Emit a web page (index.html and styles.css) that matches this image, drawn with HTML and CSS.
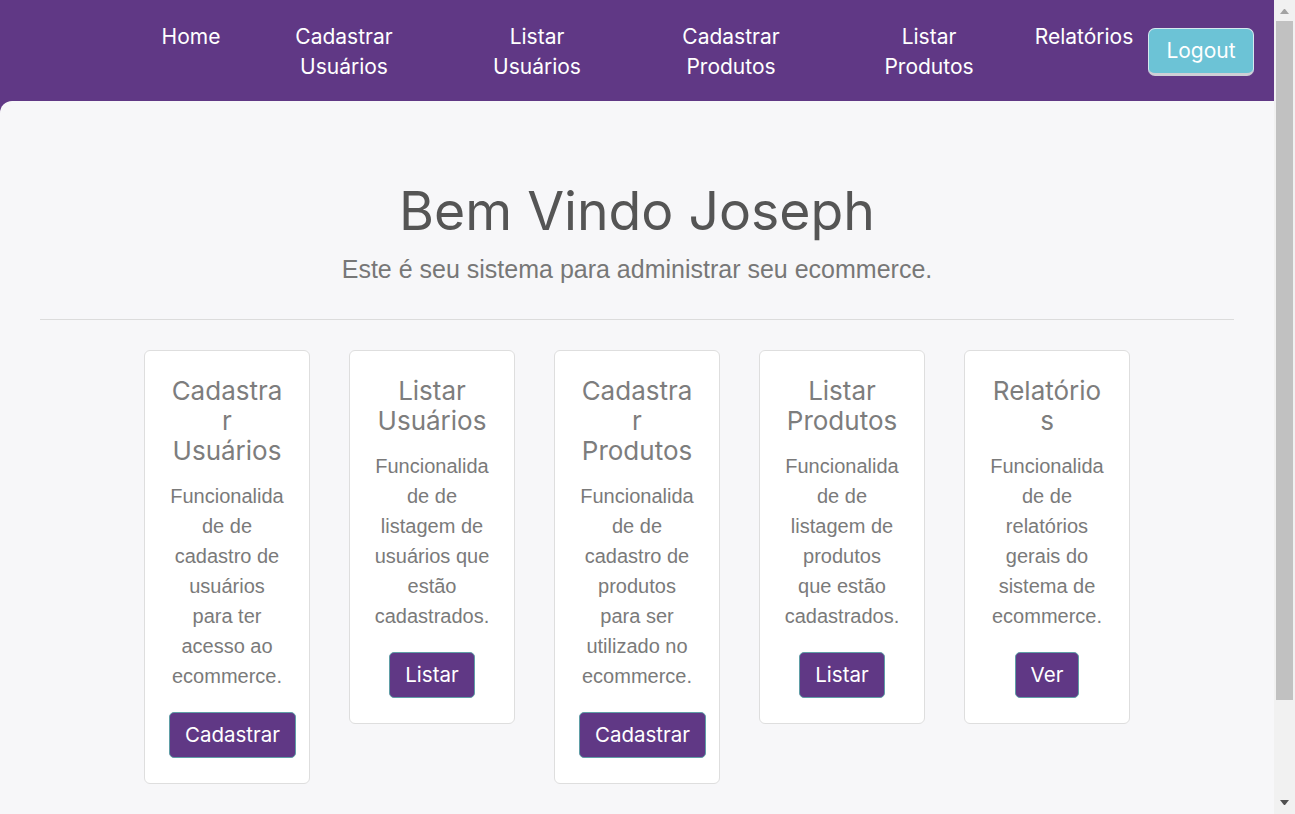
FILE: index.html
```html
<!DOCTYPE html>
<html lang="pt-BR">
<head>
<meta charset="utf-8">
<title>Ecommerce Admin</title>
<link rel="stylesheet" href="styles.css">
</head>
<body>
<div class="page">
  <header class="topbar">
    <ul class="nav">
      <li class="nav-item nav-item--sm"><a class="nav-link" href="#">Home</a></li>
      <li class="nav-item nav-item--cu"><a class="nav-link" href="#">Cadastrar Usuários</a></li>
      <li class="nav-item nav-item--lu"><a class="nav-link" href="#">Listar Usuários</a></li>
      <li class="nav-item nav-item--lg"><a class="nav-link" href="#">Cadastrar Produtos</a></li>
      <li class="nav-item nav-item--lg"><a class="nav-link" href="#">Listar Produtos</a></li>
      <li class="nav-item nav-item--rel"><a class="nav-link" href="#">Relatórios</a></li>
    </ul>
    <button class="btn-logout" type="button">Logout</button>
  </header>
  <main class="main">
    <section class="hero">
      <h1 class="hero-title">Bem Vindo Joseph</h1>
      <p class="hero-lead">Este é seu sistema para administrar seu ecommerce.</p>
    </section>
    <hr class="divider">
    <section class="cards">
      <div class="card">
        <h2 class="card-title">Cadastrar Usuários</h2>
        <p class="card-text">Funcionalidade de cadastro de usuários para ter acesso ao ecommerce.</p>
        <a class="btn" href="#">Cadastrar</a>
      </div>
      <div class="card">
        <h2 class="card-title">Listar Usuários</h2>
        <p class="card-text">Funcionalidade de listagem de usuários que estão cadastrados.</p>
        <a class="btn" href="#">Listar</a>
      </div>
      <div class="card">
        <h2 class="card-title">Cadastrar Produtos</h2>
        <p class="card-text">Funcionalidade de cadastro de produtos para ser utilizado no ecommerce.</p>
        <a class="btn" href="#">Cadastrar</a>
      </div>
      <div class="card">
        <h2 class="card-title">Listar Produtos</h2>
        <p class="card-text">Funcionalidade de listagem de produtos que estão cadastrados.</p>
        <a class="btn" href="#">Listar</a>
      </div>
      <div class="card">
        <h2 class="card-title">Relatórios</h2>
        <p class="card-text">Funcionalidade de relatórios gerais do sistema de ecommerce.</p>
        <a class="btn" href="#">Ver</a>
      </div>
    </section>
  </main>
</div>
<div class="scrollbar" aria-hidden="true">
  <div class="scroll-btn"><span class="arrow-up"></span></div>
  <div class="scroll-track"><div class="scroll-thumb"></div></div>
  <div class="scroll-btn"><span class="arrow-down"></span></div>
</div>
</body>
</html>
```
FILE: styles.css
```css
html { background: #f7f7f9; }

body {
  margin: 0;
  display: flex;
  align-items: flex-start;
  background: #f7f7f9;
  font-family: "Liberation Sans", Arial, sans-serif;
}

.page {
  flex: 1;
  min-width: 0;
  background: #603885;
}

/* scrollbar column */
.scrollbar {
  position: sticky;
  top: 0;
  width: 21px;
  height: 100vh;
  flex-shrink: 0;
  display: flex;
  flex-direction: column;
  background: #f1f1f1;
}
.scroll-btn {
  height: 21px;
  display: flex;
  justify-content: center;
  align-items: center;
}
.scroll-btn:last-child { align-items: flex-start; padding-top: 7px; box-sizing: border-box; }
.arrow-up, .arrow-down {
  width: 1px;
  height: 0;
  border-left: 4px solid transparent;
  border-right: 4px solid transparent;
}
.arrow-up { border-bottom: 5px solid #a3a3a3; margin-top: 2px; }
.arrow-down { border-top: 5px solid #505050; }
.scroll-track { flex: 1; }
.scroll-thumb {
  height: 679px;
  margin: 0 2px;
  background: #c1c1c1;
}

/* header */
.topbar {
  height: 101px;
  box-sizing: border-box;
  display: flex;
  justify-content: flex-end;
  align-items: stretch;
  padding: 0 20px 0 0;
  background: #603885;
  font-family: Inter, "Noto Sans", sans-serif;
}

.nav {
  display: flex;
  list-style: none;
  margin: 0;
  padding: 22px 0 0 0;
}

.nav-item {
  display: flex;
  justify-content: center;
  align-items: flex-start;
}
.nav-item--sm { width: 110px; }
.nav-item--cu { width: 196px; }
.nav-item--lu { width: 190px; }
.nav-item--lg { width: 198px; }
.nav-item--rel { width: 112px; }

.nav-link {
  max-width: 120px;
  text-align: center;
  color: #fff;
  text-decoration: none;
  font-size: 21px;
  line-height: 30px;
  flex-shrink: 0;
}

.btn-logout {
  align-self: center;
  margin: 3px 0 0 8px;
  width: 106px;
  height: 48px;
  padding: 0 0 2px;
  border: 1px solid #d6e9ee;
  border-bottom: 3px solid #cfcfd6;
  border-radius: 7px;
  background: #6cc3d6;
  color: #fff;
  font-family: Inter, "Noto Sans", sans-serif;
  font-size: 21px;
}

/* main */
.main {
  background: #f7f7f9;
  border-top-left-radius: 12px;
  padding: 78px 0 30px;
}

.hero { text-align: center; }

.hero-title {
  margin: 0;
  font-family: Inter, "Noto Sans", sans-serif;
  font-weight: 400;
  font-size: 53.5px;
  line-height: 64px;
  color: #555;
}

.hero-lead {
  margin: 11px 0 0;
  font-size: 25px;
  line-height: 30px;
  color: #777;
}

.divider {
  margin: 35px 40px 0 40px;
  border: 0;
  border-top: 1px solid #dcdcdc;
}

.cards {
  display: flex;
  justify-content: center;
  align-items: flex-start;
  gap: 39px;
  margin-top: 30px;
}

.card {
  width: 166px;
  box-sizing: border-box;
  padding: 25px 24px;
  background: #fff;
  border: 1px solid #dedede;
  border-radius: 6px;
  text-align: center;
  overflow-wrap: break-word;
  word-break: break-word;
}

.card-title {
  margin: 0 0 15px;
  font-family: Inter, "Noto Sans", sans-serif;
  font-weight: 400;
  font-size: 26px;
  line-height: 30px;
  color: #7d7d7d;
}

.card-text {
  margin: 0 0 21px;
  font-size: 20px;
  line-height: 30px;
  color: #7a7a7a;
}

.btn {
  display: inline-block;
  padding: 7px 15px;
  border: 1px solid #5f9ea6;
  border-radius: 5px;
  background: #603885;
  color: #fff;
  text-decoration: none;
  font-family: Inter, "Noto Sans", sans-serif;
  font-size: 20.5px;
  line-height: 30px;
  white-space: nowrap;
  word-break: normal;
}
```
